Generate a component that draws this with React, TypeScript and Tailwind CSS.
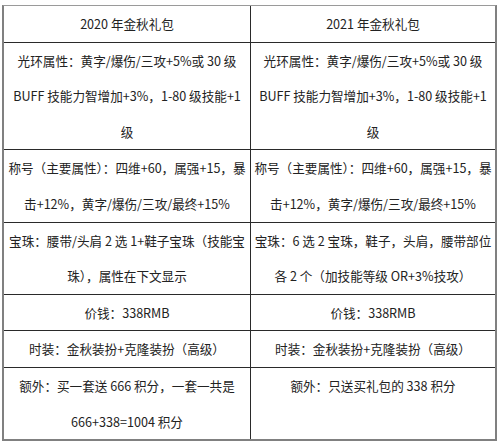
import React from "react";

const rows: [React.ReactNode, React.ReactNode][] = [
  ["2020 年金秋礼包", "2021 年金秋礼包"],
  [
    <>光环属性：黄字/爆伤/三攻+5%或 30 级<br />BUFF 技能力智增加+3%，1-80 级技能+1<br />级</>,
    <>光环属性：黄字/爆伤/三攻+5%或 30 级<br />BUFF 技能力智增加+3%，1-80 级技能+1<br />级</>,
  ],
  [
    <>称号（主要属性）：四维+60，属强+15，暴<br />击+12%，黄字/爆伤/三攻/最终+15%</>,
    <>称号（主要属性）：四维+60，属强+15，暴<br />击+12%，黄字/爆伤/三攻/最终+15%</>,
  ],
  [
    <>宝珠：腰带/头肩 2 选 1+鞋子宝珠（技能宝<br />珠），属性在下文显示</>,
    <>宝珠：6 选 2 宝珠，鞋子，头肩，腰带部位<br />各 2 个（加技能等级 OR+3%技攻）</>,
  ],
  ["价钱：338RMB", "价钱：338RMB"],
  ["时装：金秋装扮+克隆装扮（高级）", "时装：金秋装扮+克隆装扮（高级）"],
  [
    <>额外：买一套送 666 积分，一套一共是<br />666+338=1004 积分</>,
    <>额外：只送买礼包的 338 积分<br />&nbsp;</>,
  ],
];

export default function App() {
  return (
    <div
      className="w-[500px] h-[447px] bg-white overflow-hidden pt-[5px] pl-[2px]"
      style={{ fontFamily: '"Noto Sans CJK SC", "Noto Sans", sans-serif' }}
    >
      <div className="w-[495px] border-t border-t-[#9a9a9a] border-l-2 border-r-2 border-b-2 border-[#808080] text-[#222] text-[12.6px] leading-[35.6px]">
        {rows.map((r, i) => (
          <div
            key={i}
            className={`grid grid-cols-[247px_1fr] ${i < rows.length - 1 ? "border-b border-[#2a2a2a]" : ""}`}
          >
            <div className="border-r border-[#2a2a2a] text-center whitespace-nowrap">{r[0]}</div>
            <div className="text-center whitespace-nowrap">{r[1]}</div>
          </div>
        ))}
      </div>
    </div>
  );
}
